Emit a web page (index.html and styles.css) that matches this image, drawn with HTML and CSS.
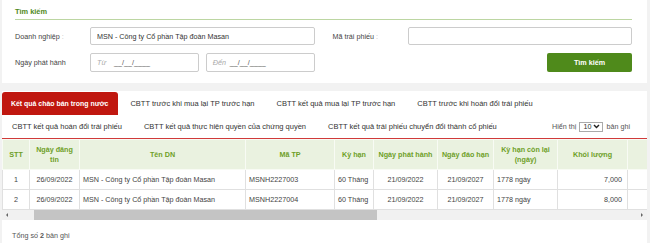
FILE: index.html
```html
<!DOCTYPE html>
<html lang="vi">
<head>
    <meta charset="UTF-8">
    <meta name="viewport" content="width=device-width, initial-scale=1.0">
    <title>Tra cứu trái phiếu</title>
    <link rel="stylesheet" href="styles.css">
</head>
<body>
    <!-- Search form -->
    <div class="search-box">
        <div class="search-title">Tìm kiếm</div>
        <div class="search-row">
            <div class="field">
                <label class="field-label">Doanh nghiệp <span class="colon">:</span></label>
                <input type="text" class="text-input" value="MSN - Công ty Cổ phần Tập đoàn Masan">
            </div>
            <div class="field">
                <label class="field-label">Mã trái phiếu <span class="colon">:</span></label>
                <input type="text" class="text-input">
            </div>
        </div>
        <div class="search-row">
            <div class="field">
                <label class="field-label">Ngày phát hành</label>
                <div class="date-range">
                    <div class="date-input"><span class="date-prefix">Từ</span><span class="date-mask">__/__/____</span></div>
                    <div class="date-input"><span class="date-prefix">Đến</span><span class="date-mask">__/__/____</span></div>
                </div>
            </div>
            <div class="field">
                <button type="button" class="search-button">Tìm kiếm</button>
            </div>
        </div>
    </div>

    <!-- Results -->
    <div class="result-box">
        <div class="tabs">
            <div class="tab-row">
                <div class="tab active">Kết quả chào bán trong nước</div>
                <div class="tab">CBTT trước khi mua lại TP trước hạn</div>
                <div class="tab">CBTT kết quả mua lại TP trước hạn</div>
                <div class="tab">CBTT trước khi hoán đổi trái phiếu</div>
            </div>
            <div class="tab-row">
                <div class="tab">CBTT kết quả hoán đổi trái phiếu</div>
                <div class="tab">CBTT kết quả thực hiện quyền của chứng quyền</div>
                <div class="tab">CBTT kết quả trái phiếu chuyển đổi thành cổ phiếu</div>
                <div class="page-size">
                    Hiển thị
                    <div class="page-select">
                        <span>10</span>
                        <svg width="7" height="5" viewBox="0 0 7 5"><path d="M1 1 L3.5 3.6 L6 1" fill="none" stroke="#222" stroke-width="1.4"/></svg>
                    </div>
                    bản ghi
                </div>
            </div>
        </div>

        <div class="table-wrap">
            <table class="data-table">
                <colgroup>
                    <col class="c-stt"><col class="c-date"><col class="c-name"><col class="c-code">
                    <col class="c-term"><col class="c-issue"><col class="c-mature"><col class="c-left">
                    <col class="c-volume"><col class="c-rest">
                </colgroup>
                <thead>
                    <tr>
                        <th>STT</th>
                        <th>Ngày đăng tin</th>
                        <th>Tên DN</th>
                        <th>Mã TP</th>
                        <th>Kỳ hạn</th>
                        <th>Ngày phát hành</th>
                        <th>Ngày đáo hạn</th>
                        <th>Kỳ hạn còn lại (ngày)</th>
                        <th>Khối lượng</th>
                        <th></th>
                    </tr>
                </thead>
                <tbody>
                    <tr>
                        <td class="center">1</td>
                        <td class="center">26/09/2022</td>
                        <td>MSN - Công ty Cổ phần Tập đoàn Masan</td>
                        <td>MSNH2227003</td>
                        <td>60 Tháng</td>
                        <td class="center">21/09/2022</td>
                        <td class="center">21/09/2027</td>
                        <td>1778 ngày</td>
                        <td class="right">7,000</td>
                        <td></td>
                    </tr>
                    <tr>
                        <td class="center">2</td>
                        <td class="center">26/09/2022</td>
                        <td>MSN - Công ty Cổ phần Tập đoàn Masan</td>
                        <td>MSNH2227004</td>
                        <td>60 Tháng</td>
                        <td class="center">21/09/2022</td>
                        <td class="center">21/09/2027</td>
                        <td>1778 ngày</td>
                        <td class="right">8,000</td>
                        <td></td>
                    </tr>
                </tbody>
            </table>
        </div>

        <!-- horizontal scrollbar of the table -->
        <div class="scrollbar">
            <span class="scroll-arrow left"></span>
            <div class="scroll-track"><div class="scroll-thumb"></div></div>
            <span class="scroll-arrow right"></span>
        </div>

        <div class="total">Tổng số <b>2</b> bản ghi</div>
    </div>
</body>
</html>
```

FILE: styles.css
```css
/* Global */
body {
    margin: 0;
    padding: 0 3px 0 2px;
    background-color: #f2f2f2;
    font-family: 'Liberation Sans', Arial, sans-serif;
    font-size: 7.2px;
    color: #444;
    -webkit-font-smoothing: antialiased;
}

/* Search form */
.search-box {
    background-color: #fff;
    padding: 6px 15px 11px 13px;
}

.search-title {
    color: #4f8a1b;
    font-weight: bold;
    font-size: 7.4px;
    line-height: 12px;
    padding-bottom: 1px;
    border-bottom: 1px solid #bcd6a2;
    margin-bottom: 7px;
}

.search-row {
    display: flex;
    gap: 18px;
    margin-bottom: 8px;
}

.search-row:last-child {
    margin-bottom: 0;
}

.field {
    flex: 1;
    display: flex;
    align-items: center;
}

.field-label {
    width: 75px;
    flex-shrink: 0;
}

.colon {
    color: #bbb;
}

.text-input {
    flex: 1;
    min-width: 0;
    height: 18px;
    box-sizing: border-box;
    border: 1px solid #ccc;
    border-radius: 2px;
    padding: 0 6px;
    font: inherit;
    color: #333;
}

.date-range {
    flex: 1;
    display: flex;
    gap: 7px;
}

.date-input {
    flex: 1;
    height: 19px;
    box-sizing: border-box;
    border: 1px solid #ccc;
    border-radius: 2px;
    padding: 0 6px;
    display: flex;
    align-items: center;
}

.date-prefix {
    width: 17px;
    font-style: italic;
    color: #aaa;
}

.date-mask {
    color: #555;
}

.search-button {
    margin-left: auto;
    width: 85px;
    height: 19px;
    background-color: #4f8a1b;
    color: #fff;
    border: none;
    border-radius: 2px;
    font-family: inherit;
    font-size: 7.2px;
    font-weight: bold;
}

/* Results */
.result-box {
    background-color: #fff;
    margin-top: 8px;
    min-height: 160px;
}

.tabs {
    padding-top: 1px;
    border-bottom: 1px solid #d03a3a;
}

.tab-row {
    display: flex;
    align-items: center;
    height: 23px;
}

.tab {
    padding: 0 10px;
    margin-right: 2px;
    line-height: 23px;
    font-size: 7.5px;
    color: #333;
}

.tab.active {
    padding: 0 10px 0 9px;
    background-color: #c0170f;
    color: #fff;
    font-weight: bold;
    font-size: 6.95px;
    border-radius: 3px 3px 0 0;
}

.page-size {
    margin-left: auto;
    margin-right: 17px;
    display: flex;
    align-items: center;
    gap: 3px;
    color: #555;
}

.page-select {
    width: 24px;
    height: 10px;
    box-sizing: border-box;
    border: 1px solid #aaa;
    display: flex;
    align-items: center;
    justify-content: space-between;
    padding: 0 2px 0 3px;
    color: #333;
}

.table-wrap {
    overflow: hidden;
}

.data-table {
    border-collapse: collapse;
    table-layout: fixed;
    width: 1181px;
}

.c-stt { width: 27px; }
.c-date { width: 50px; }
.c-name { width: 166px; }
.c-code { width: 89px; }
.c-term { width: 39px; }
.c-issue { width: 64px; }
.c-mature { width: 56px; }
.c-left { width: 64px; }
.c-volume { width: 70px; }
.c-rest { width: 556px; }

.data-table th {
    height: 29px;
    padding: 0 3px;
    background-color: #eaf2e0;
    color: #6e9f28;
    font-weight: bold;
    border: 1px solid #f8fbf4;
    line-height: 10px;
}

.data-table td {
    height: 19px;
    padding: 0 3px;
    border: 1px solid #e0e0e0;
    white-space: nowrap;
    overflow: hidden;
    color: #444;
}

.data-table td.center {
    text-align: center;
}

.data-table td.right {
    text-align: right;
    padding-right: 5px;
}

/* Fake horizontal scrollbar */
.scrollbar {
    display: flex;
    height: 10px;
    background-color: #f1f1f1;
}

.scroll-arrow {
    width: 10px;
    display: flex;
    align-items: center;
    justify-content: center;
}

.scroll-arrow::before {
    content: "";
    border-top: 2px solid transparent;
    border-bottom: 2px solid transparent;
}

.scroll-arrow.left::before {
    border-right: 2px solid #666;
}

.scroll-arrow.right::before {
    border-left: 2px solid #666;
}

.scroll-track {
    flex: 1;
}

.scroll-thumb {
    margin-left: 22px;
    width: 343px;
    height: 100%;
    background-color: #c4c4c4;
}

.total {
    padding: 11px 10px;
    color: #555;
}
```
